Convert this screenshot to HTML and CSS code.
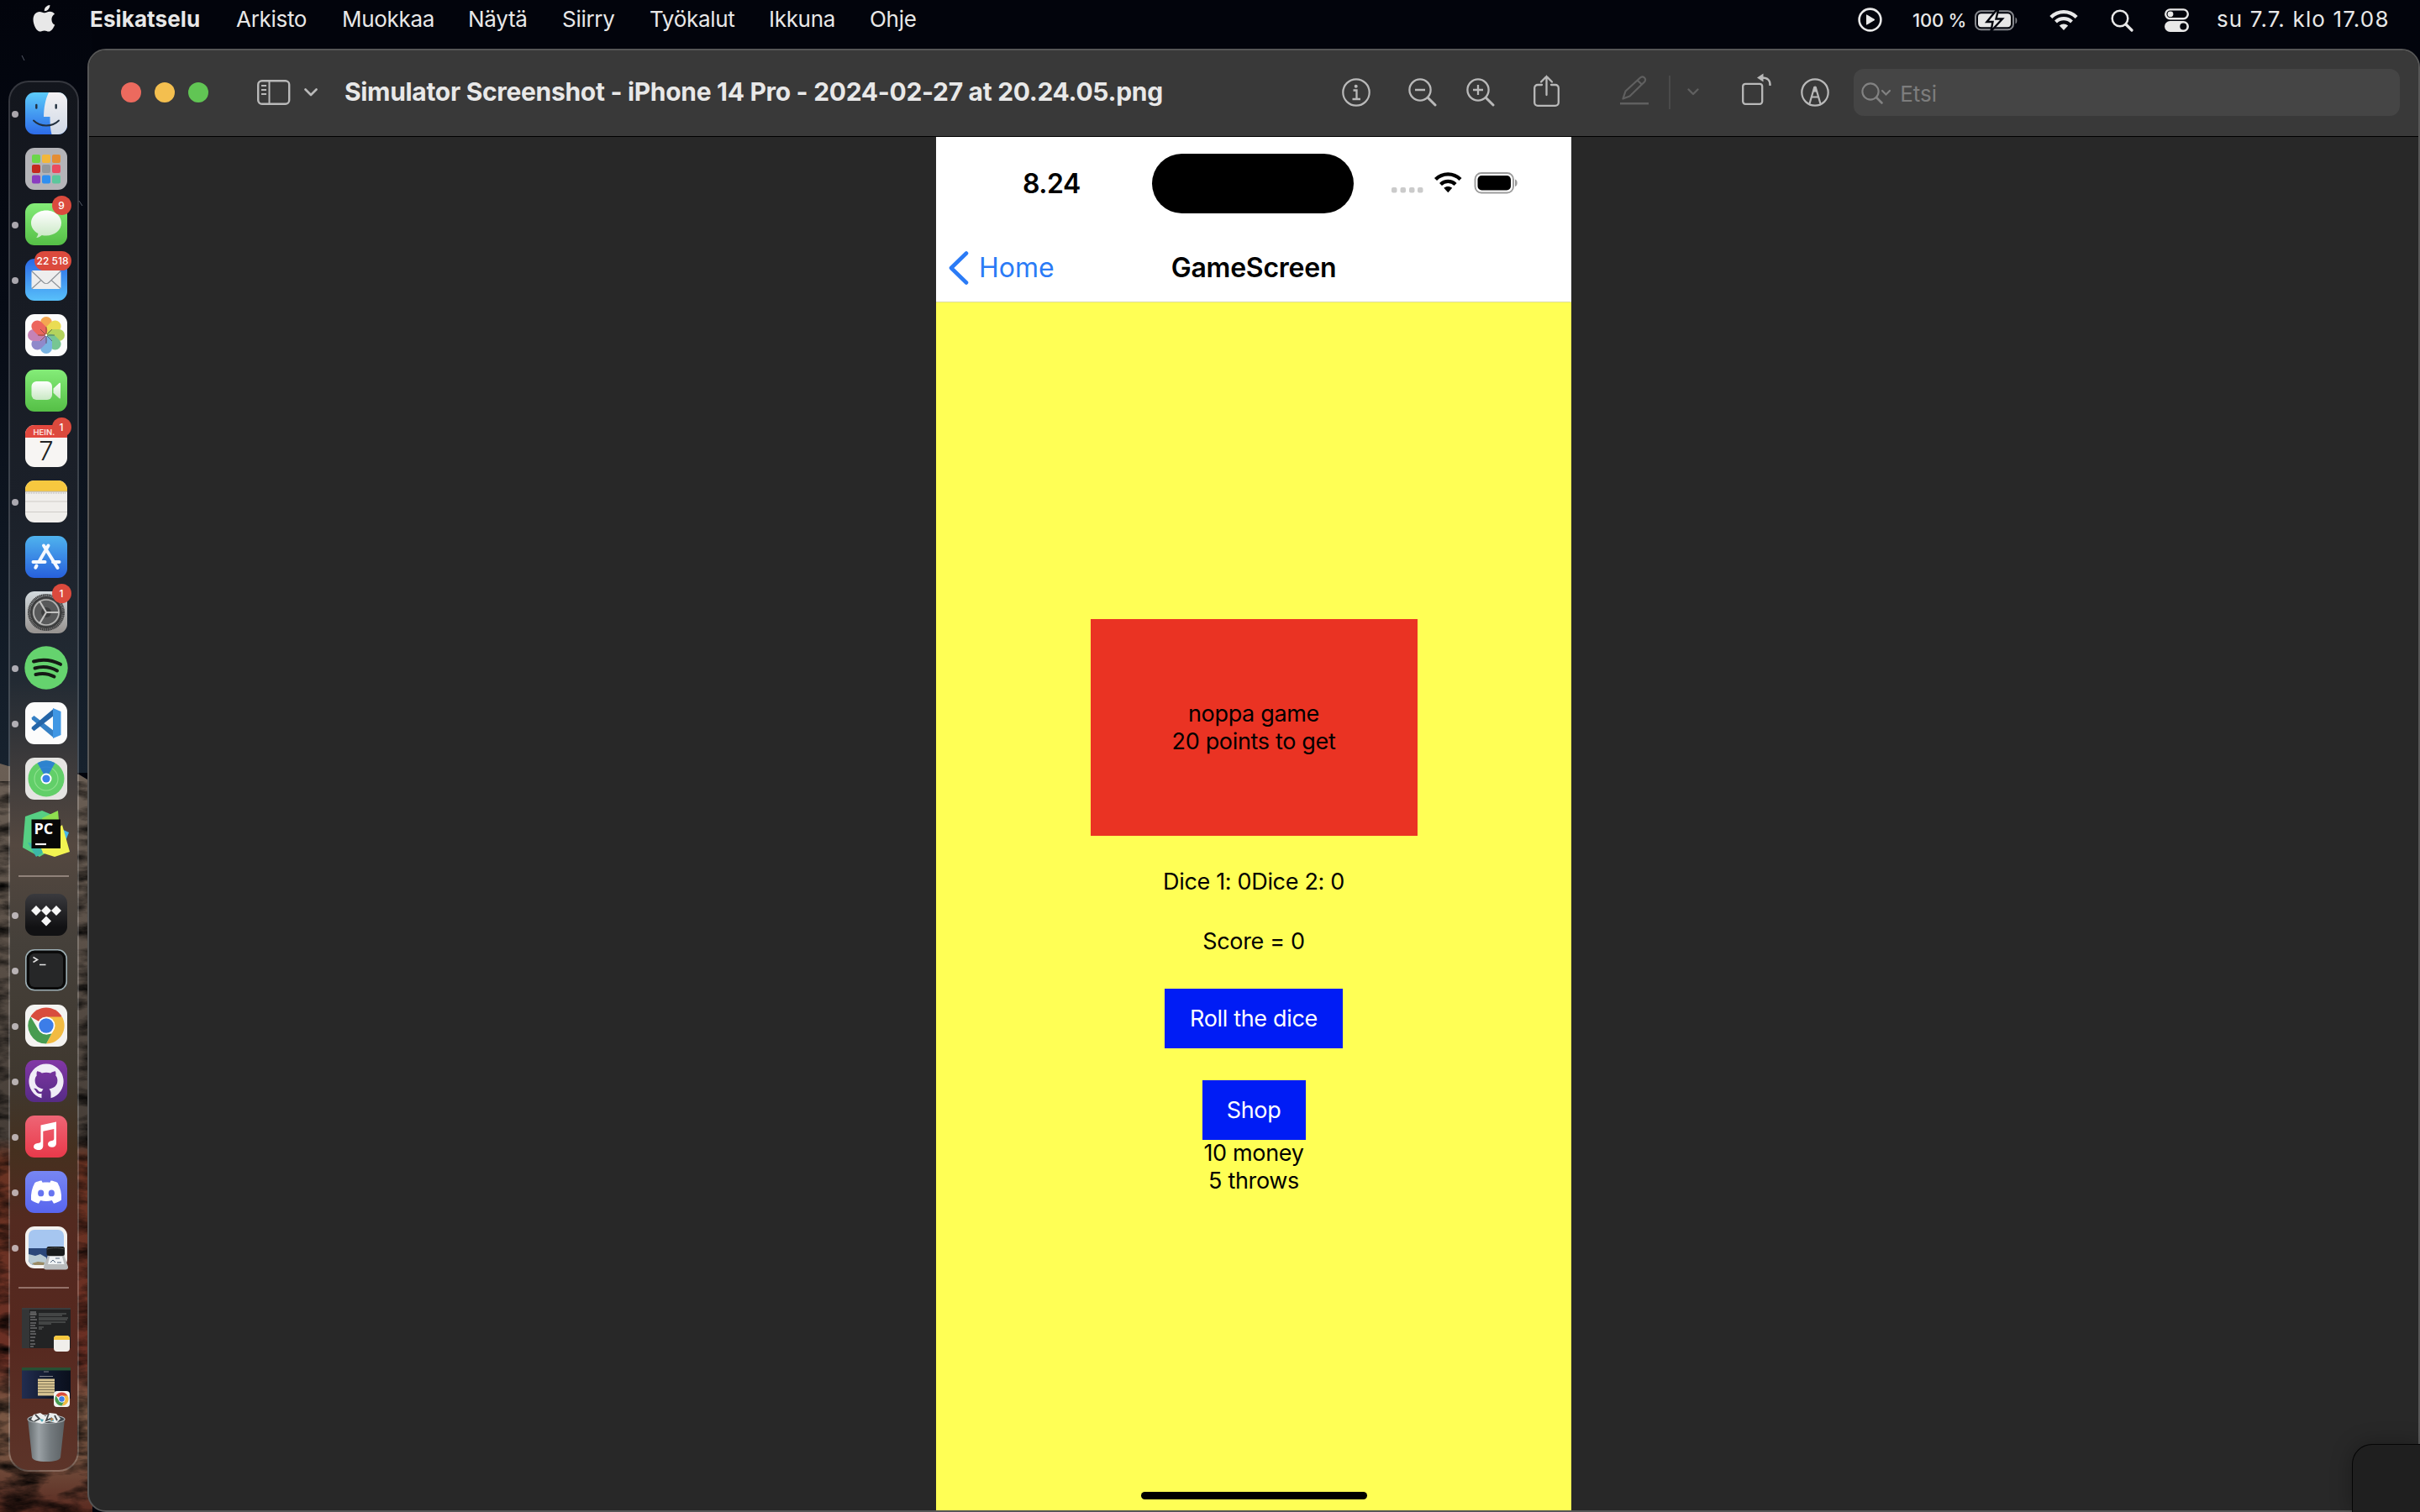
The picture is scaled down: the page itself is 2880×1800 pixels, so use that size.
FILE: index.html
```html
<!DOCTYPE html>
<html lang="fi">
<head>
<meta charset="utf-8">
<title>Esikatselu</title>
<link rel="stylesheet" href="styles.css">
</head>
<body>
<svg class="wallpaper" width="110" height="1800" viewBox="0 0 110 1800">
  <defs>
    <linearGradient id="sky" x1="0" y1="0" x2="0" y2="1"><stop offset="0" stop-color="#02040c"/><stop offset=".4" stop-color="#060b15"/><stop offset="1" stop-color="#17222e"/></linearGradient>
    <linearGradient id="rock" x1="0" y1="0" x2="0" y2="1"><stop offset="0" stop-color="#6b5f55"/><stop offset=".2" stop-color="#5e534a"/><stop offset=".5" stop-color="#453d37"/><stop offset=".53" stop-color="#6a3322"/><stop offset=".8" stop-color="#6b2f24"/><stop offset=".86" stop-color="#7a5844"/><stop offset=".93" stop-color="#73503e"/><stop offset="1" stop-color="#5a2a20"/></linearGradient>
    <filter id="grain" x="0" y="0" width="1" height="1"><feTurbulence type="fractalNoise" baseFrequency=".02 .06" numOctaves="5" seed="4"/><feColorMatrix values="0 0 0 0 0  0 0 0 0 0  0 0 0 0 0  2.2 0 0 0 -.85"/></filter>
  </defs>
  <rect width="110" height="920" fill="url(#sky)"/>
  <path d="M0 909L10 912L94 922L104 928L110 930V1800H0Z" fill="url(#rock)"/>
  <rect y="930" width="110" height="870" filter="url(#grain)"/>
  <path d="M26 66l3 6M94 239l4 6" stroke="#555b66" stroke-width="1"/>
</svg>

<header class="menubar">
  <svg class="apple" width="27" height="32" viewBox="0 0 27 32"><path fill="#e8e8e8" d="M22.4 16.9c0-3 1.700-5 3.700-6.200-1.300-1.900-3.400-2.900-5.800-2.900-2.600 0-4.400 1.500-5.900 1.500S10.300 7.900 8 7.900C3.900 7.900.5 11.400.5 17.200.5 24 4.900 31.600 8.600 31.600c1.800 0 2.900-1.200 5.200-1.200s3.200 1.200 5.100 1.200c3.200 0 5.900-4.500 7.300-8.100-2.200-.9-3.800-3.400-3.800-6.600zM18.600 5C19.900 3.500 20.500 1.800 20.400 0c-2.100.2-3.900 1.200-5.100 2.600-1.100 1.300-1.700 3-1.500 4.600 1.900 0 3.600-.7 4.800-2.200z"/></svg>
  <nav class="menus">
    <b>Esikatselu</b><span>Arkisto</span><span>Muokkaa</span><span>Näytä</span><span>Siirry</span><span>Työkalut</span><span>Ikkuna</span><span>Ohje</span>
  </nav>
  <div class="status">
    <svg class="s-play" width="29" height="29" viewBox="0 0 29 29"><circle cx="14.500" cy="14.500" r="12.900" fill="none" stroke="#e8e8e8" stroke-width="2.600"/><path d="M10.500 8.800v11.400l9.500-5.700z" fill="#e8e8e8" stroke="#e8e8e8" stroke-linejoin="round"/></svg>
    <span class="percent">100 %</span>
    <svg class="s-batt" width="52" height="25" viewBox="0 0 52 25"><rect x="1" y="1.300" width="45" height="22" rx="6.500" fill="none" stroke="#85878c" stroke-width="2"/><rect x="4" y="4.300" width="39" height="16" rx="4" fill="#e8e8e8"/><path d="M48.500 8.500c2.500 1.200 2.500 6.800 0 8z" fill="#85878c"/><path d="M26 0L14.500 14h7L19.500 25 33 10.500h-7.500L28 0z" fill="#e8e8e8" stroke="#03060e" stroke-width="2.400"/></svg>
    <svg class="s-wifi" width="34" height="26" viewBox="0 0 34 26"><path d="M1.800 9.500c8.500-8.500 21.900-8.500 30.400 0M7.500 15c5.400-5.200 13.600-5.200 19 0" fill="none" stroke="#e8e8e8" stroke-width="4.200"/><path d="M11.800 19.500c3-2.700 7.400-2.700 10.400 0L17 25z" fill="#e8e8e8"/></svg>
    <svg class="s-find" width="27" height="27" viewBox="0 0 27 27"><circle cx="11" cy="11" r="9.300" fill="none" stroke="#e8e8e8" stroke-width="2.500"/><path d="M18 18l7 7" stroke="#e8e8e8" stroke-width="3.200" stroke-linecap="round"/></svg>
    <svg class="s-cc" width="29" height="28" viewBox="0 0 29 28"><rect x="1.200" y="1.400" width="26.600" height="10.800" rx="5.400" fill="none" stroke="#e8e8e8" stroke-width="2.400"/><circle cx="7" cy="6.800" r="3.400" fill="#e8e8e8"/><rect x="0" y="15" width="29" height="13" rx="6.500" fill="#e8e8e8"/><circle cx="22.300" cy="21.500" r="4" fill="#03060e"/></svg>
    <span class="clock">su 7.7. klo 17.08</span>
  </div>
</header>

<main class="desktop">
<aside class="dock">
  <div class="app run"><svg viewBox="0 0 50 50"><defs><linearGradient id="fb" x1="0" y1="0" x2="0" y2="1"><stop offset="0" stop-color="#5ccbfa"/><stop offset="1" stop-color="#2d6be8"/></linearGradient><linearGradient id="fw" x1="0" y1="0" x2="0" y2="1"><stop offset="0" stop-color="#f3f1f3"/><stop offset="1" stop-color="#d0d9e6"/></linearGradient></defs><rect width="50" height="50" rx="11" fill="url(#fb)"/><path d="M28 0h11a11 11 0 0 1 11 11v28a11 11 0 0 1-11 11h-7.500c-1.600-6-2-13-2-21H22c0-10 2-21 6-29z" fill="url(#fw)"/><path d="M13.300 15v3.500M36.700 15v3.500" stroke="#22303f" stroke-width="2.400" stroke-linecap="round"/><path d="M10 33.500c8 8 22 8 30 0" fill="none" stroke="#22303f" stroke-width="1.900" stroke-linecap="round"/></svg></div>
  <div class="app"><svg viewBox="0 0 50 50"><rect width="50" height="50" rx="11" fill="#b4b4b8"/><rect x="8" y="8" width="10" height="10" rx="2" fill="#6bd64a"/><rect x="20" y="8" width="10" height="10" rx="2" fill="#f3b73c"/><rect x="32" y="8" width="10" height="10" rx="2" fill="#e48d33"/><rect x="8" y="20" width="10" height="10" rx="2" fill="#c4281f"/><rect x="20" y="20" width="10" height="10" rx="2" fill="#93989c"/><rect x="32" y="20" width="10" height="10" rx="2" fill="#ea4b60"/><rect x="8" y="32.500" width="10" height="10" rx="2" fill="#8a3cc0"/><rect x="20" y="32.500" width="10" height="10" rx="2" fill="#2f8ff0"/><rect x="32" y="32.500" width="10" height="10" rx="2" fill="#5cc79c"/></svg></div>
  <div class="app run"><svg viewBox="0 0 50 50"><defs><linearGradient id="gr" x1="0" y1="0" x2="0" y2="1"><stop offset="0" stop-color="#84ec78"/><stop offset="1" stop-color="#55bf46"/></linearGradient><linearGradient id="wh" x1="0" y1="0" x2="0" y2="1"><stop offset="0" stop-color="#fff"/><stop offset="1" stop-color="#c9e8c4"/></linearGradient></defs><rect width="50" height="50" rx="11" fill="url(#gr)"/><path d="M25 8.500c10 0 18 6.600 18 15s-8 15-18 15c-1.800 0-3.500-.2-5.200-.6-1.800 1.600-4 2.700-6.600 3 1.300-1.400 2-2.900 2.200-4.800C10.400 33.300 7 28.700 7 23.500c0-8.400 8-15 18-15z" fill="url(#wh)"/></svg><span class="badge">9</span></div>
  <div class="app run"><svg viewBox="0 0 50 50"><defs><linearGradient id="ml" x1="0" y1="0" x2="0" y2="1"><stop offset="0" stop-color="#2a68e6"/><stop offset="1" stop-color="#58c0fa"/></linearGradient></defs><rect width="50" height="50" rx="11" fill="url(#ml)"/><rect x="7.500" y="14" width="35" height="22" rx="2" fill="#eeeeee"/><path d="M8 15l13.500 13c2 2 5 2 7 0L42 15M8 35.500l11-10M42 35.500l-11-10" fill="none" stroke="#8d9297" stroke-width="1.100"/></svg><span class="badge">22 518</span></div>
  <div class="app"><svg viewBox="0 0 50 50"><rect width="50" height="50" rx="11" fill="#fcfcfc"/><g opacity=".87"><rect x="18" y="3" width="14" height="21" rx="7" fill="#f39a38"/><rect x="18" y="3" width="14" height="21" rx="7" fill="#e8d83a" transform="rotate(45 25 25)"/><rect x="18" y="3" width="14" height="21" rx="7" fill="#a9cd46" transform="rotate(90 25 25)"/><rect x="18" y="3" width="14" height="21" rx="7" fill="#64bf83" transform="rotate(135 25 25)"/><rect x="18" y="3" width="14" height="21" rx="7" fill="#66a9de" transform="rotate(180 25 25)"/><rect x="18" y="3" width="14" height="21" rx="7" fill="#8079c3" transform="rotate(225 25 25)"/><rect x="18" y="3" width="14" height="21" rx="7" fill="#bd70ac" transform="rotate(270 25 25)"/><rect x="18" y="3" width="14" height="21" rx="7" fill="#ea5046" transform="rotate(315 25 25)"/></g><path d="M25 25V15M25 25l7-7M25 25h10M25 25l7 7M25 25v10M25 25l-7 7M25 25H15M25 25l-7-7" stroke="#3a3428" stroke-width="1" opacity=".55"/><circle cx="25" cy="25" r="1.200" fill="#fff"/></svg></div>
  <div class="app"><svg viewBox="0 0 50 50"><rect width="50" height="50" rx="11" fill="url(#gr)"/><rect x="7.500" y="14" width="24.500" height="22" rx="6" fill="url(#wh)"/><path d="M33.500 22.500l7-6.500c.8-.6 1.500-.3 1.500.6v17c0 .9-.7 1.200-1.500.6l-7-6.500z" fill="url(#wh)"/></svg></div>
  <div class="app"><svg viewBox="0 0 50 50"><rect width="50" height="50" rx="11" fill="#f7f5f3"/><path d="M0 15V11A11 11 0 0 1 11 0H39A11 11 0 0 1 50 11V15Z" fill="#e2483e"/><text class="cal-month" x="9.500" y="12">HEIN.</text><text class="cal-day" x="25" y="42">7</text></svg><span class="badge">1</span></div>
  <div class="app run"><svg viewBox="0 0 50 50"><rect width="50" height="50" rx="11" fill="#f0eeeb"/><path d="M0 13V11A11 11 0 0 1 11 0H39A11 11 0 0 1 50 11V13Z" fill="#f7c83f"/><path d="M0 13.200h50" stroke="#b9b4ac" stroke-width="1"/><path d="M1 15h48" stroke="#999" stroke-width=".8" stroke-dasharray="1 1"/><path d="M0 25h50M0 37.500h50" stroke="#cfccc8" stroke-width="1"/></svg></div>
  <div class="app"><svg viewBox="0 0 50 50"><defs><linearGradient id="as" x1="0" y1="0" x2="0" y2="1"><stop offset="0" stop-color="#4fb3ee"/><stop offset="1" stop-color="#2760dc"/></linearGradient></defs><rect width="50" height="50" rx="11" fill="url(#as)"/><path d="M27.500 11.500L16.500 30.500M22 11.500L38.500 38M9.500 31h14M33 31h7.500M13.500 35.500l-1.200 2.200" stroke="#f5f9ff" stroke-width="4" stroke-linecap="round"/></svg></div>
  <div class="app"><svg viewBox="0 0 50 50"><defs><linearGradient id="st" x1="0" y1="0" x2="0" y2="1"><stop offset="0" stop-color="#d3dade"/><stop offset="1" stop-color="#96928f"/></linearGradient></defs><rect width="50" height="50" rx="11" fill="url(#st)"/><circle cx="25" cy="25" r="20.500" fill="none" stroke="#38393a" stroke-width="3" stroke-dasharray="1.300 .5"/><circle cx="25" cy="25" r="17.800" fill="#5f6060" stroke="#3a3b3c" stroke-width="2.400"/><circle cx="25" cy="25" r="15" fill="#58595a" stroke="#b5b5b4" stroke-width="1.700"/><circle cx="25" cy="25" r="6" fill="#3c3d3e"/><path d="M25 25h15.500M25 25l-8-13.500M25 25l-8 13.500" stroke="#c1c1c0" stroke-width="2.200"/></svg><span class="badge">1</span></div>
  <div class="app run"><svg viewBox="0 0 50 50"><circle cx="25" cy="25" r="25.700" fill="#65d36e"/><path d="M10 17.500c10-3 22-1.800 32 3.300M11.500 25.500c9-2.500 18.500-1.500 26.500 3M12.500 33c7.500-1.800 15.500-1 22 2.600" fill="none" stroke="#151a15" stroke-linecap="round" stroke-width="4"/></svg></div>
  <div class="app run"><svg viewBox="0 0 50 50"><rect width="50" height="50" rx="11" fill="#fcfcfc"/><path d="M7.500 18.500l3-2.500L34 34v8.500L8 20.500z" fill="#3580c5"/><path d="M7.500 31.500l3 2.800L34 16V7.500L8 29.500z" fill="#2465a8"/><path d="M33 7l9.500 4v28L33 43z" fill="#4097e4"/></svg></div>
  <div class="app"><svg viewBox="0 0 50 50"><rect width="50" height="50" rx="11" fill="#e5e4e2"/><circle cx="25" cy="25" r="21.500" fill="#62cf69"/><circle cx="25" cy="25" r="14" fill="none" stroke="#8ee18e" stroke-width="1.200"/><path d="M25 25L14.500 6.200a21.500 21.500 0 0 1 21 0z" fill="#2576e0" opacity=".85"/><circle cx="25" cy="25" r="6.500" fill="#fff"/><circle cx="25" cy="25" r="4.600" fill="#3a82e8"/></svg></div>
  <div class="app"><svg viewBox="0 0 50 50"><path d="M0 4L20-3l12 5 2 40-17 10L-3 41z" fill="#56cf83"/><path d="M32 14l20 9-6 15-20 0z" fill="#44b6e8"/><path d="M20 6l19-9 2 23-18 2z" fill="#8fe04f"/><path d="M16 38l28-24 9 32-18 6-22-7z" fill="#f2f351"/><path d="M3 35l10 17 8-5-4-10z" fill="#3cb8a8"/><rect x="7.500" y="7.500" width="34.500" height="34.500" fill="#070707"/><text class="pc" x="10.500" y="24.500">PC</text><path d="M12 37h13" stroke="#f4f4f4" stroke-width="2.200"/></svg></div>
  <hr class="rule first">
  <div class="app run"><svg viewBox="0 0 50 50"><defs><linearGradient id="td" x1="0" y1="0" x2="0" y2="1"><stop offset="0" stop-color="#3a3a3e"/><stop offset=".8" stop-color="#111113"/></linearGradient></defs><rect width="50" height="50" rx="11" fill="url(#td)"/><path d="M13 14l6 6-6 6-6-6zM25 14l6 6-6 6-6-6zM37 14l6 6-6 6-6-6zM25 26.500l6 6-6 6-6-6z" fill="#f6f6f6"/></svg></div>
  <div class="app run"><svg viewBox="0 0 50 50"><rect x=".8" y=".8" width="48.400" height="48" rx="10.500" fill="#0a0a0a" stroke="#9caeb4" stroke-width="1.600"/><rect x="5" y="5" width="40" height="40" rx="6" fill="#262728"/><path d="M9.500 9.500l5 3-5 3M17 18.500h7.500" fill="none" stroke="#e2e2e2" stroke-width="1.600"/></svg></div>
  <div class="app run"><svg viewBox="0 0 50 50"><defs><g id="chrome"><path d="M25 25L6.400 14.200A21.500 21.500 0 0 1 43.600 14.200Z" fill="#d84c3d"/><path d="M25 14.500H43.900A21.500 21.500 0 0 1 25 46.500L34 30Z" fill="#f2bb42"/><path d="M25 46.500A21.500 21.500 0 0 1 6.400 14.200L16 30.500 25 35.500 31.500 34.500Z" fill="#479c50"/><circle cx="25" cy="25" r="10.500" fill="#fff"/><circle cx="25" cy="25" r="8.700" fill="#3c7de8"/></g></defs><rect width="50" height="50" rx="11" fill="#f4f3f1"/><use href="#chrome"/></svg></div>
  <div class="app run"><svg viewBox="0 0 50 50"><defs><linearGradient id="gh" x1="0" y1="0" x2="0" y2="1"><stop offset="0" stop-color="#8237a6"/><stop offset="1" stop-color="#562b85"/></linearGradient></defs><rect width="50" height="50" rx="11" fill="url(#gh)"/><path d="M25 4.500a20.800 20.800 0 0 0-5.500 40.800v-5.500c-4.500.8-6-1.200-7.200-3.600-.7-1.300-1.800-1.700-2.300-2.200 3-1 4.300.9 5.500 2.500 1.200 1.700 2.800 1.600 4.500.8.300-1.400.9-2.300 1.600-2.900-5.500-.7-10-3.400-10-10.300 0-2.500.9-4.400 2.200-5.900-.4-1.500-.4-3.300.3-5 2 0 4 1 5.700 2.200 3.300-.9 7.100-.9 10.400 0 1.700-1.200 3.700-2.200 5.700-2.200.7 1.700.7 3.500.3 5 1.300 1.500 2.200 3.400 2.200 5.900 0 6.900-4.500 9.600-10 10.300 1.300 1.200 2.100 2.800 2.100 5v5.900A20.800 20.800 0 0 0 25 4.500z" fill="#f0edf6"/></svg></div>
  <div class="app run"><svg viewBox="0 0 50 50"><defs><linearGradient id="mu" x1="0" y1="0" x2="0" y2="1"><stop offset="0" stop-color="#ee6575"/><stop offset="1" stop-color="#e9394a"/></linearGradient></defs><rect width="50" height="50" rx="11" fill="url(#mu)"/><path d="M18.500 11.500L37 7.500V33c0 3-2 4.800-5 4.800s-5-1.500-5-3.700c0-2.500 2-3.800 4.500-4.200 1.900-.3 2.800-.7 2.800-2.400V16l-13 2.800V36c0 3-2 5-5.300 5S10 39.400 10 37.300c0-2.600 2.100-3.800 4.500-4.200 2.800-.5 4-.7 4-2.600z" fill="#fff"/></svg></div>
  <div class="app run"><svg viewBox="0 0 50 50"><defs><linearGradient id="dc" x1="0" y1="0" x2="0" y2="1"><stop offset="0" stop-color="#7786f3"/><stop offset="1" stop-color="#5865ee"/></linearGradient></defs><rect width="50" height="50" rx="11" fill="url(#dc)"/><path d="M19.500 11.500c-3 .4-5.600 1.200-8 2.400C8 20 6.500 27 7 34.500c2.600 2 5.700 3.400 9 4.200l2.200-3.600c4.500 1.200 9.100 1.200 13.600 0l2.200 3.600c3.300-.8 6.400-2.200 9-4.200.5-7.500-1-14.500-4.500-20.600-2.400-1.200-5-2-8-2.400l-1.100 2.200c-3-.4-5.800-.4-8.800 0zM18.700 22.500a3.600 3.900 0 1 1 0 7.800 3.600 3.900 0 0 1 0-7.800zm12.600 0a3.600 3.900 0 1 1 0 7.800 3.600 3.900 0 0 1 0-7.800z" fill="#fff" fill-rule="evenodd"/></svg></div>
  <div class="app run"><svg viewBox="0 0 50 50"><rect width="50" height="50" rx="11" fill="#f3f1ef"/><rect x="4" y="4" width="42" height="42" rx="7" fill="#a6c6f0"/><path d="M4 26h42v13a7 7 0 0 1-7 7H11a7 7 0 0 1-7-7z" fill="#2b4779"/><path d="M4 33l8 2 6-2 7 4v9H11a7 7 0 0 1-7-7z" fill="#b9cbd3"/><path d="M8 44l7-2 8 1-1 3H11z" fill="#9a8a63"/><path d="M27 34h19l5 14c.5 2-1 3.500-3 3.500H25c-2 0-3.500-1.500-3-3.500z" fill="#b9bcbd"/><path d="M29 36h15l2.500 9H27z" fill="#f0f3f5"/><path d="M30 43l3-3 3 3M38 43h5M36 38h5" fill="none" stroke="#55677c"/><rect x="25.500" y="24" width="21.500" height="11" rx="2.500" fill="#191b1c"/><path d="M26 27c6-2 14-2 20.500 0" fill="none" stroke="#4c4f50"/></svg></div>
  <hr class="rule second">
  <div class="app"><svg viewBox="0 0 50 50"><rect x="-4" y="0" width="58" height="48" fill="#222324"/><path d="M-4 1h58" stroke="#3a3c3d" stroke-width="2"/><rect x="-4" y="2" width="9" height="46" fill="#343637"/><path d="M6 5h7M6 11h6M6 14h8M6 18h7M6 21h6M6 24h8M6 28h6M6 31h7M6 35h6M6 39h5M6 43h6M6 46h4" stroke="#8f9091" stroke-width="1"/><path d="M5.500 7.500h8" stroke="#666" stroke-width="2.500"/><path d="M16 7h33M16 9h28M16 12h35M16 14h34M16 17h32M16 19h15M16 23h6M16 25h4" stroke="#77797a" stroke-width=".8"/><rect x="34" y="33" width="19" height="19" rx="4" fill="#f0eeeb"/><path d="M34 38v-1a4 4 0 0 1 4-4h11a4 4 0 0 1 4 4v1z" fill="#f7c83f"/></svg></div>
  <div class="app"><svg viewBox="0 0 50 50"><defs><linearGradient id="nb"><stop offset="0" stop-color="#222d50"/><stop offset=".6" stop-color="#10182c"/><stop offset="1" stop-color="#0a0f1c"/></linearGradient></defs><rect x="-4" y="5" width="58" height="37" fill="url(#nb)"/><rect x="-4" y="5" width="58" height="3.500" fill="#275033"/><path d="M17 15.500h16M22 10h6" stroke="#9fa0a2" stroke-width=".8"/><path d="M15 18.500h20v20H15z" fill="#d9c592"/><path d="M15 21.500h20M15 24.800h20M15 28.100h20M15 31.400h20M15 34.700h20" stroke="#4b4636" stroke-width=".7"/><rect x="34" y="33" width="19" height="19" rx="4" fill="#f4f3f1"/><use href="#chrome" transform="translate(34.200 33.200) scale(.373)"/></svg></div>
  <div class="app trash"><svg viewBox="0 0 50 57"><defs><linearGradient id="tr"><stop offset="0" stop-color="#62686b"/><stop offset=".3" stop-color="#9aa1a5"/><stop offset=".6" stop-color="#757c80"/><stop offset="1" stop-color="#5b6063"/></linearGradient></defs><path d="M3 6c0 3 9.500 5 22 5s22-2 22-5l-5 46c-.5 3-7 5-17 5s-16.500-2-17-5z" fill="url(#tr)"/><ellipse cx="25" cy="6.500" rx="22" ry="5" fill="#41464a" stroke="#aab0b3" stroke-width="1.200"/><path d="M7 7l3-6 8-2 6 4 5-4 8 1 5 6-5 5-9-2-8 3-8-2z" fill="#eceeee"/><path d="M12 1l5 5-6 3M28 0l-3 8 7-3M35 2l3 6" fill="none" stroke="#474b4e" stroke-width="1.800"/><path d="M17 6l5 1-2 3zM28 8l5-3 1 4z" fill="#4aa8b8"/><path d="M30 5l4 1-3 3z" fill="#c97b40"/></svg></div>
</aside>

<section class="window">
  <div class="toolbar">
    <i class="light red"></i><i class="light amber"></i><i class="light green"></i>
    <svg class="t-side" width="40" height="30" viewBox="0 0 40 30"><rect x="1.200" y="1.200" width="37" height="27.600" rx="4.500" fill="none" stroke="#b9b9b9" stroke-width="2.400"/><path d="M14.500 1v28M5 7h6M5 12h6M5 17h6" stroke="#b9b9b9" stroke-width="2"/></svg>
    <svg class="t-chev" width="16" height="10" viewBox="0 0 16 10"><path d="M1.500 1.500L8 8l6.500-6.500" fill="none" stroke="#b9b9b9" stroke-width="2.600" stroke-linecap="round" stroke-linejoin="round"/></svg>
    <h1 class="title">Simulator Screenshot - iPhone 14 Pro - 2024-02-27 at 20.24.05.png</h1>
    <div class="tools">
      <svg width="34" height="34" viewBox="0 0 34 34"><circle cx="17" cy="17" r="15.700" fill="none" stroke="#b9b9b9" stroke-width="2.200"/><circle cx="16.700" cy="9.800" r="2" fill="#b9b9b9"/><path d="M13.500 14.500h4V25M12.500 25h9.500" fill="none" stroke="#b9b9b9" stroke-width="2.300"/></svg>
      <svg class="t-out" width="34" height="34" viewBox="0 0 34 34"><circle cx="14" cy="14" r="12.600" fill="none" stroke="#b9b9b9" stroke-width="2.300"/><path d="M23.500 23.500l8.500 8.500" stroke="#b9b9b9" stroke-width="3" stroke-linecap="round"/><path d="M8 14h12" stroke="#b9b9b9" stroke-width="2.300"/></svg>
      <svg class="t-in" width="34" height="34" viewBox="0 0 34 34"><circle cx="14" cy="14" r="12.600" fill="none" stroke="#b9b9b9" stroke-width="2.300"/><path d="M23.500 23.500l8.500 8.500" stroke="#b9b9b9" stroke-width="3" stroke-linecap="round"/><path d="M8 14h12M14 8v12" stroke="#b9b9b9" stroke-width="2.300"/></svg>
      <svg class="t-share" width="31" height="38" viewBox="0 0 31 38"><path d="M10 12H5a3.800 3.800 0 0 0-3.800 3.800V33A3.800 3.800 0 0 0 5 36.800h21a3.800 3.800 0 0 0 3.800-3.800V15.800A3.800 3.800 0 0 0 26 12h-5M15.500 24V2M9 8.500L15.500 2 22 8.500" fill="none" stroke="#b9b9b9" stroke-width="2.300" stroke-linecap="round"/></svg>
      <svg class="t-pen" width="35" height="35" viewBox="0 0 35 35"><path d="M0 33.200h34" stroke="#606060" stroke-width="2.400"/><path d="M3.500 27.500l3-9L24 2.500c1.500-1.500 3.500-1.300 5 0s1.400 3.500 0 5L11.500 24.500zM20.500 5.500l6 5.500" fill="none" stroke="#606060" stroke-width="2.200" stroke-linejoin="round"/></svg>
      <i class="divider"></i>
      <svg class="t-chev2" width="14" height="9" viewBox="0 0 14 9"><path d="M1.500 1.500L7 7l5.500-5.500" fill="none" stroke="#606060" stroke-width="2.300" stroke-linecap="round" stroke-linejoin="round"/></svg>
      <svg class="t-rot" width="36" height="38" viewBox="0 0 36 38"><rect x="1.200" y="12.800" width="23" height="24" rx="3" fill="none" stroke="#b9b9b9" stroke-width="2.300"/><path d="M33.500 15c.5-6-2.500-9.500-9.500-9.500" fill="none" stroke="#b9b9b9" stroke-width="2.300"/><path d="M18 5.500L25.500.5v10z" fill="#b9b9b9"/></svg>
      <svg class="t-mark" width="34" height="34" viewBox="0 0 34 34"><circle cx="17" cy="17" r="15.700" fill="none" stroke="#b9b9b9" stroke-width="2.200"/><path d="M10.500 30.500L16.200 11h1.600l5.700 19.500M13 22.500h8" fill="none" stroke="#b9b9b9" stroke-width="2.200"/><path d="M14.500 16.500L17 8.500l2.500 8z" fill="#b9b9b9"/></svg>
    </div>
    <div class="search"><svg width="36" height="27" viewBox="0 0 36 27"><circle cx="11" cy="11" r="9.600" fill="none" stroke="#828282" stroke-width="2.100"/><path d="M18 18l6.500 6.500" stroke="#828282" stroke-width="2.600" stroke-linecap="round"/><path d="M25 10l4.500 4.500L34 10" fill="none" stroke="#828282" stroke-width="2.200" stroke-linecap="round"/></svg><span>Etsi</span></div>
  </div>
  <div class="canvas">
    <article class="phone">
      <header class="ios">
        <div class="statusbar">
          <span class="time">8.24</span>
          <i class="island"></i>
          <svg class="signal" width="151" height="28" viewBox="0 0 151 28"><g fill="#cbcbcb"><rect x="0" y="20" width="6.500" height="6.500" rx="2"/><rect x="10.500" y="20" width="6.500" height="6.500" rx="2"/><rect x="21" y="20" width="6.500" height="6.500" rx="2"/><rect x="31" y="20" width="6.500" height="6.500" rx="2"/></g><path d="M52.500 10.500c8.200-8.200 21.300-8.200 29.500 0M58.500 16.500c5-4.800 12.600-4.800 17.600 0" fill="none" stroke="#000" stroke-width="4.300"/><path d="M62.300 20.800c2.900-2.500 7-2.500 9.900 0L67.300 26.300z"/><rect x="99.500" y="3" width="45.500" height="23.500" rx="7.500" fill="none" stroke="#9b9b9b" stroke-width="1.900"/><rect x="102.500" y="6" width="39.500" height="17.500" rx="4.800"/><path d="M147 10.500c3.500 1 3.500 7.500 0 8.500z" fill="#9b9b9b"/></svg>
        </div>
        <div class="navbar">
          <div class="back"><svg width="24" height="40" viewBox="0 0 24 40"><path d="M21 2.500L3 20l18 17.500" fill="none" stroke="#2b7bf6" stroke-width="4.600" stroke-linecap="round" stroke-linejoin="round"/></svg><span>Home</span></div>
          <strong>GameScreen</strong>
          <span></span>
        </div>
      </header>
      <div class="game">
        <div class="card"><span>noppa game</span><span>20 points to get</span></div>
        <p class="dice">Dice 1: 0Dice 2: 0</p>
        <p class="score">Score = 0</p>
        <button class="btn roll">Roll the dice</button>
        <button class="btn shop">Shop</button>
        <p class="money">10 money</p>
        <p>5 throws</p>
        <i class="indicator"></i>
      </div>
    </article>
  </div>
</section>
</main>
<div class="corner"></div>
</body>
</html>
```
FILE: styles.css
```css
* { box-sizing: border-box; }
html, body { margin: 0; padding: 0; }
body {
  width: 2880px; height: 1800px; overflow: hidden; position: relative;
  display: flex; flex-direction: column;
  background: #02040c; color: #e8e8e8;
  font-family: Inter, "Liberation Sans", sans-serif;
}
svg { display: block; flex: none; }
p, h1 { margin: 0; }
.wallpaper { position: absolute; left: 0; top: 0; }

/* menu bar */
.menubar { position: relative; flex: none; height: 58px; display: flex; align-items: flex-start; font-size: 26px; line-height: 46px; }
.apple { margin: 6px 0 0 39px; }
.menus { margin-left: 41px; display: grid; grid-template-columns: 174px 126px 150px 112px 104px 142px 120px 80px; white-space: nowrap; letter-spacing: -.3px; }
.menus b { letter-spacing: .1px; }
.status { margin-left: auto; display: flex; width: 669px; white-space: nowrap; }
.s-play { margin-top: 9px; }
.percent { margin-left: 36px; width: 64px; font-size: 22px; line-height: 48px; font-weight: 500; letter-spacing: -.2px; }
.s-batt { margin: 12px 0 0 10px; }
.s-wifi { margin: 11px 0 0 37px; }
.s-find { margin: 11px 0 0 39px; }
.s-cc { margin: 10px 0 0 37px; }
.clock { margin-left: 33px; letter-spacing: 1.150px; }

.desktop { position: relative; flex: 1; display: flex; align-items: flex-start; min-height: 0; }

/* dock */
.dock {
  flex: none; width: 84px; height: 1656px; margin: 38px 10px 0 10px; padding: 12px 0 0 2px;
  display: flex; flex-direction: column; gap: 16px;
  border: 2px solid rgba(255, 255, 255, .2); border-radius: 24px;
  background: linear-gradient(#13161d 0, #1b2029 30%, #222a33 43%, #3c3a3b 49%, #544840 55%, #45403a 62%, #3f382f 72%, #45301f 77%, #532a20 82%, #56281f 90%, #5c3429 100%);
  background-clip: padding-box;
}
.app { position: relative; flex: none; height: 50px; display: flex; padding-left: 16px; }
.app svg { width: 50px; height: 50px; overflow: visible; }
.app.run { padding-left: 0; align-items: center; gap: 8px; }
.app.run::before { content: ""; width: 8px; height: 8px; border-radius: 50%; background: rgba(240, 235, 240, .68); margin-top: 2px; }
.trash { margin-top: -6px; }
.app.trash, .app.trash svg { height: 57px; }
.badge {
  position: absolute; right: 7.500px; top: -9px; min-width: 23px; height: 23px; border-radius: 12px; padding: 0 3px;
  background: #db4a3d; color: #fff; font-size: 12px; line-height: 23px; text-align: center; font-weight: 500;
}
.cal-month { font: 600 9.500px Inter, sans-serif; fill: #fbe4e2; }
.cal-day { font: 300 31px Inter, sans-serif; fill: #222; text-anchor: middle; }
.pc { font: 700 18px "Open Sans", sans-serif; fill: #fff; }
.rule { flex: none; width: 60px; height: 2px; border: 0; background: rgba(235, 215, 205, .42); margin: 0 0 0 8px; }
.rule.first { margin-top: 8px; margin-bottom: 4px; }
.rule.second { margin-top: 6px; margin-bottom: 7px; }

/* window */
.window {
  flex: none; width: 2776px; height: 1742px; display: flex; flex-direction: column;
  border: 2px solid #565656; border-radius: 22px; overflow: hidden; background: #282828;
}
.toolbar { flex: none; height: 103px; background: #393939; border-bottom: 1px solid #000; display: flex; align-items: center; padding: 0 22px 2px 38px; }
.light { width: 24px; height: 24px; border-radius: 50%; margin-right: 16px; }
.red { background: #ec6a5e; }
.amber { background: #f4bf4f; }
.green { background: #61c554; }
.t-side { margin-left: 42px; }
.t-chev { margin-left: 16px; }
.title { margin: -2px 0 0 32px; font-size: 30px; line-height: 40px; font-weight: 700; letter-spacing: -.31px; white-space: nowrap; width: 1188px; }
.tools { display: flex; align-items: center; width: 609px; margin-top: -1px; }
.t-out { margin-left: 45px; }
.t-in { margin-left: 35px; }
.t-share { margin-left: 46px; margin-top: -4px; }
.t-pen { margin-left: 72px; margin-top: -4px; }
.divider { width: 2px; height: 40px; background: #4a4a4a; margin-left: 23px; }
.t-chev2 { margin-left: 20px; }
.t-rot { margin-left: 51px; margin-top: -8px; }
.t-mark { margin-left: 34px; }
.search { width: 650px; height: 56px; border-radius: 12px; background: #454545; display: flex; align-items: center; gap: 10px; padding: 2px 0 0 9px; font-size: 26px; color: #7d7d7d; }
.canvas { flex: 1; min-height: 0; display: flex; justify-content: center; }

/* simulator image */
.phone { width: 756px; height: 1637px; display: flex; flex-direction: column; background: #fff; color: #000; }
.ios { flex: none; height: 197px; border-bottom: 1px solid #dcdca0; }
.statusbar { display: flex; align-items: flex-start; height: 114px; }
.time { margin: 36px 0 0 103px; width: 154px; font-size: 32px; line-height: 40px; font-weight: 600; letter-spacing: -.5px; }
.island { width: 240px; height: 71px; border-radius: 36px; background: #000; margin-top: 20px; }
.signal { margin: 40px 0 0 45px; }
.navbar { display: grid; grid-template-columns: 1fr auto 1fr; align-items: center; height: 83px; padding-top: 1px; font-size: 32px; line-height: 40px; }
.back { display: flex; align-items: center; padding-left: 15px; gap: 12px; color: #2b7bf6; }
.navbar strong { font-weight: 600; letter-spacing: -.25px; }
.game { flex: 1; background: #ffff55; display: flex; flex-direction: column; align-items: center; font-size: 27px; line-height: 33px; letter-spacing: -.33px; }
.card { width: 389px; height: 258px; margin-top: 377px; background: #ea3323; display: flex; flex-direction: column; align-items: center; justify-content: center; }
.dice { margin-top: 38px; }
.score { margin-top: 38px; }
.btn { border: 0; border-radius: 0; background: #001cf5; color: #fff; font: inherit; letter-spacing: inherit; height: 71px; padding: 0; }
.roll { width: 212px; margin-top: 40px; }
.shop { width: 123px; margin-top: 38px; }
.money { margin-top: -1px; }
.indicator { width: 269px; height: 9px; border-radius: 5px; background: #000; margin-top: auto; margin-bottom: 15px; }

.corner { position: absolute; right: 0; bottom: 0; width: 81px; height: 81px; border: 1px solid #050505; border-width: 1px 0 0 1px; border-top-left-radius: 24px; background: #1f1f1f; box-shadow: 0 0 26px rgba(0, 0, 0, .3); }
```
